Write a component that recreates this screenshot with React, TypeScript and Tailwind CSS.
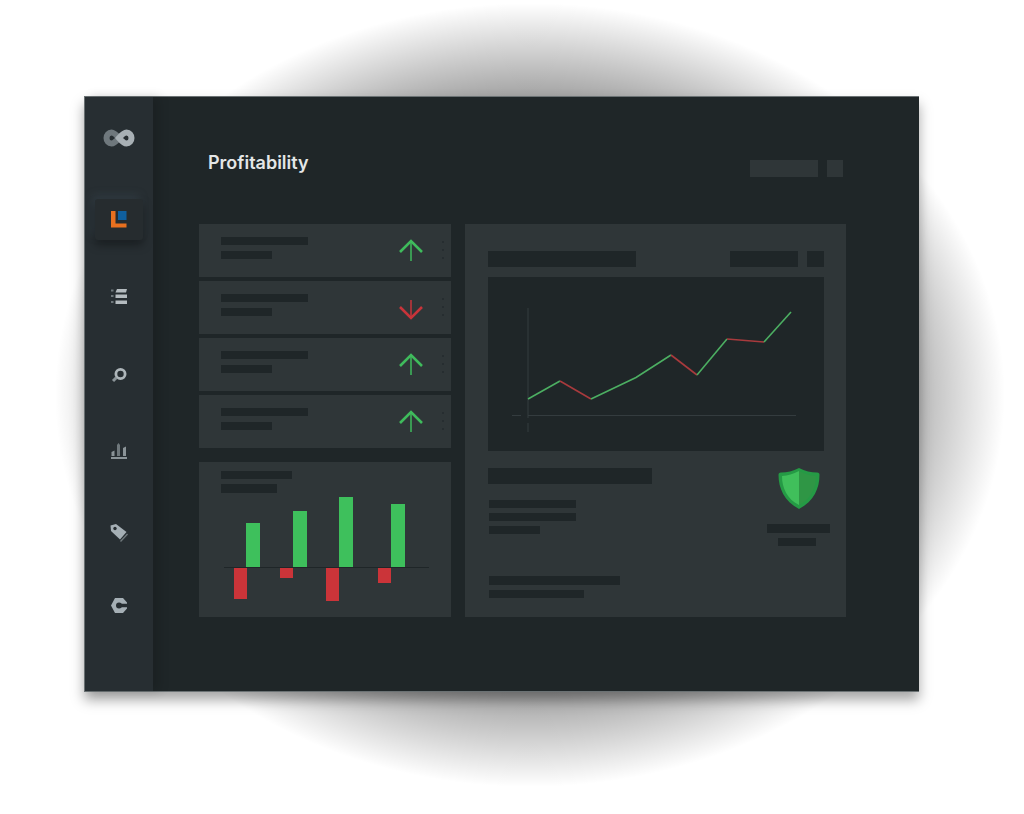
const rows = [
  { up: true },
  { up: false },
  { up: true },
  { up: true },
]

const greenBars = [
  { x: 22, h: 44 },
  { x: 69, h: 56 },
  { x: 115, h: 70 },
  { x: 167, h: 63 },
]

const redBars = [
  { x: 10, h: 31 },
  { x: 56, h: 10 },
  { x: 102, h: 33 },
  { x: 154, h: 15 },
]

function Bar({ className }: { className: string }) {
  return <div className={`bg-[#1f2628] ${className}`} />
}

function Arrow({ up }: { up: boolean }) {
  return (
    <svg width="24" height="26" viewBox="0 0 24 26" fill="none" strokeWidth="2.600" stroke={up ? "#3fbb5c" : "#c8343a"} className="-mt-[2px]">
      {up ? (
        <>
          <path d="M12 4V24" strokeWidth="1.500" />
          <path d="M1 15L12 4L23 15" />
        </>
      ) : (
        <>
          <path d="M12 6V24" strokeWidth="1.500" />
          <path d="M1 13L12 24L23 13" />
        </>
      )}
    </svg>
  )
}

function Row({ up }: { up: boolean }) {
  return (
    <div className="h-[53px] bg-[#2f3638] flex items-center pl-[22px]">
      <div className="flex flex-col gap-[6px] w-[178px] pb-[5px]">
        <Bar className="w-[87px] h-[8px]" />
        <Bar className="w-[51px] h-[8px]" />
      </div>
      <Arrow up={up} />
      <div className="ml-[19px] -mt-[2px] flex flex-col gap-[6px]">
        <div className="w-[2px] h-[2px] bg-[#262d30]" />
        <div className="w-[2px] h-[2px] bg-[#262d30]" />
        <div className="w-[2px] h-[2px] bg-[#262d30]" />
      </div>
    </div>
  )
}

function BarChart() {
  return (
    <svg width="212" height="110" viewBox="0 0 212 110" className="ml-[25px] mt-[4px]">
      {greenBars.map((b) => (
        <rect key={b.x} x={b.x} y={70 - b.h} width="14" height={b.h} fill="#3ec05c" />
      ))}
      <rect x="0" y="70" width="205" height="1" fill="#1f2628" />
      {redBars.map((b) => (
        <rect key={b.x} x={b.x} y="71" width="13" height={b.h} fill="#cb3439" />
      ))}
    </svg>
  )
}

function LineChart() {
  return (
    <svg width="336" height="174" viewBox="0 0 336 174" fill="none" className="bg-[#1f2628]">
      <path d="M40 31V141M40 146V155M24 138.500H33M40 138.500H308" stroke="#343c3f" strokeWidth="1" />
      <g strokeWidth="1.600">
        <path d="M40 122L72 104" stroke="#4caf62" />
        <path d="M72 104L103 122" stroke="#a83a3d" />
        <path d="M103 122L148 100.500L183 78" stroke="#4caf62" />
        <path d="M183 78L209 98" stroke="#a83a3d" />
        <path d="M209 98L239 62" stroke="#4caf62" />
        <path d="M239 62L276 65" stroke="#a83a3d" />
        <path d="M276 65L303 35" stroke="#4caf62" />
      </g>
    </svg>
  )
}

function Shield() {
  return (
    <svg width="42" height="41" viewBox="0 0 42 41">
      <path d="M21 0C27 3 33 4.500 39 4.500C41 4.500 41.500 5.500 41.500 7C41.500 20 36 33 21 41C6 33 0.500 20 0.500 7C0.500 5.500 1 4.500 3 4.500C9 4.500 15 3 21 0Z" fill="#259a45" />
      <path d="M21 3C15 6 10 7.500 4 8C4 20 9 31 21 37Z" fill="#40bf5b" />
      <path d="M21 3C27 6 32 7.500 38 8C38 20 33 31 21 37Z" fill="#2f9645" />
    </svg>
  )
}

function LogoIcon() {
  return (
    <svg width="32" height="20" viewBox="0 0 32 20" fill="none">
      <path d="M16 10C13 6.500 11 4.500 8.500 4.500C5.500 4.500 3.500 7 3.500 10C3.500 13 5.500 15.500 8.500 15.500C11 15.500 13 13.500 16 10Z" stroke="#6f787d" strokeWidth="6" />
      <path d="M16 10C19 6.500 21 4.500 23.500 4.500C26.500 4.500 28.500 7 28.500 10C28.500 13 26.500 15.500 23.500 15.500C21 15.500 19 13.500 16 10Z" stroke="#a8b0b5" strokeWidth="6" />
    </svg>
  )
}

function ActiveIcon() {
  return (
    <svg width="16" height="17" viewBox="0 0 16 17">
      <path d="M0 0H4.500V12.500H15.500V16.500H0Z" fill="#e8701f" />
      <rect x="7" y="0" width="8.500" height="9" fill="#0f5f9e" />
    </svg>
  )
}

function ListIcon() {
  return (
    <svg width="16" height="15" viewBox="0 0 16 15" fill="#b4bbbf">
      <rect x="0" y="0.500" width="2.500" height="2" fill="#6f787c" />
      <rect x="0" y="6" width="2.500" height="2" fill="#6f787c" />
      <rect x="0" y="12" width="2.500" height="2" fill="#6f787c" />
      <path d="M6 0H16L15 3.500H4.500Z" />
      <path d="M4.500 5.500H16V9H4.500Z" />
      <path d="M4.500 11.500H16V15H4.500Z" />
    </svg>
  )
}

function SearchIcon() {
  return (
    <svg width="16" height="15" viewBox="0 0 16 15" fill="none">
      <circle cx="9.500" cy="6" r="4.600" stroke="#aeb6ba" strokeWidth="2.800" />
      <path d="M5.500 9.500L2 13" stroke="#8b9498" strokeWidth="3" />
    </svg>
  )
}

function StatsIcon() {
  return (
    <svg width="16" height="16" viewBox="0 0 16 16">
      <path d="M0.500 13V9L3.500 7.500V13Z" fill="#8b9498" />
      <path d="M6 13V2L7.500 0L9 2V13Z" fill="#6f787c" />
      <path d="M12 13V5L15 3.500V13Z" fill="#8b9498" />
      <rect x="0" y="14" width="16" height="2" fill="#8b9498" />
    </svg>
  )
}

function TagIcon() {
  return (
    <svg width="18" height="18" viewBox="0 0 18 18">
      <path d="M0.500 1.500L6 0L16.500 8L10 15.500L1 7Z" fill="#a5afb5" />
      <circle cx="5" cy="4.500" r="1.700" fill="#272e32" />
      <path d="M17 9.500L18 10.500L11 18L10 17Z" fill="#6f787c" />
    </svg>
  )
}

function GearIcon() {
  return (
    <svg width="16" height="15" viewBox="0 0 16 15">
      <path d="M4 0H12L16 4.500V5.800H9V9.200H16V10.500L12 15H4L0 7.500Z" fill="#a5afb5" />
      <circle cx="8" cy="7.500" r="3" fill="#272e32" />
    </svg>
  )
}

export default function App() {
  return (
    <div className="relative w-full h-[814px] overflow-hidden bg-white pt-[96px] pl-[84px] [font-family:Inter,sans-serif]">
      {/* soft halo behind the window */}
      <div className="absolute left-[55px] top-[3px] w-[950px] h-[784px] bg-[radial-gradient(closest-side,rgba(0,0,0,0.9)_40%,rgba(0,0,0,0)_100%)]" />

      <div className="relative w-[835px] h-[596px] flex bg-[#1f2628] border-y border-l border-[#6b7274] shadow-[0_8px_12px_rgba(0,0,0,0.35)]">
        {/* Sidebar */}
        <div className="w-[68px] shrink-0 bg-[#272e32] flex flex-col items-center pt-[31px] shadow-[6px_0_10px_rgba(0,0,0,0.15)]">
          <LogoIcon />
          <div className="mt-[51px] w-[48px] h-[41px] rounded-[3px] bg-[#262c2f] flex items-center justify-center shadow-[0_5px_10px_rgba(0,0,0,0.35),-3px_-4px_8px_rgba(70,85,100,0.3)]">
            <ActiveIcon />
          </div>
          <div className="mt-[49px]"><ListIcon /></div>
          <div className="mt-[64px]"><SearchIcon /></div>
          <div className="mt-[60px]"><StatsIcon /></div>
          <div className="mt-[65px]"><TagIcon /></div>
          <div className="mt-[56px]"><GearIcon /></div>
        </div>

        {/* Main */}
        <div className="flex-1 min-w-0 pl-[46px]">
          <div className="h-[127px] flex items-start">
            <h1 className="mt-[54px] ml-[9px] text-[18px] leading-[24px] font-semibold text-[#e4e6e7]">Profitability</h1>
            <div className="ml-auto mr-[76px] mt-[63px] flex gap-[9px]">
              <div className="w-[68px] h-[17px] bg-[#2f3638]" />
              <div className="w-[16px] h-[17px] bg-[#2f3638]" />
            </div>
          </div>

          <div className="flex gap-[14px]">
            {/* Left column */}
            <div className="w-[252px]">
              <div className="flex flex-col gap-[4px]">
                {rows.map((r, i) => (
                  <Row key={i} up={r.up} />
                ))}
              </div>
              <div className="mt-[14px] h-[155px] bg-[#2f3638] pt-[9px]">
                <div className="pl-[22px] flex flex-col gap-[5px]">
                  <Bar className="w-[71px] h-[8px]" />
                  <Bar className="w-[56px] h-[9px]" />
                </div>
                <BarChart />
              </div>
            </div>

            {/* Right panel */}
            <div className="w-[381px] h-[393px] bg-[#2f3638] pt-[27px] pl-[23px] pr-[22px]">
              <div className="flex">
                <Bar className="w-[148px] h-[16px]" />
                <Bar className="ml-auto w-[68px] h-[16px]" />
                <Bar className="ml-[9px] w-[17px] h-[16px]" />
              </div>
              <div className="mt-[10px]">
                <LineChart />
              </div>
              <div className="mt-[17px] flex justify-between">
                <div>
                  <Bar className="w-[164px] h-[16px]" />
                  <div className="mt-[16px] ml-[1px] flex flex-col gap-[5px]">
                    <Bar className="w-[87px] h-[8px]" />
                    <Bar className="w-[87px] h-[8px]" />
                    <Bar className="w-[51px] h-[8px]" />
                  </div>
                  <div className="mt-[42px] ml-[1px] flex flex-col gap-[5px]">
                    <Bar className="w-[131px] h-[9px]" />
                    <Bar className="w-[95px] h-[8px]" />
                  </div>
                </div>
                <div className="w-[63px] -mr-[6px] flex flex-col items-center">
                  <Shield />
                  <Bar className="mt-[15px] w-[63px] h-[9px]" />
                  <Bar className="mt-[5px] mr-[3px] w-[38px] h-[8px]" />
                </div>
              </div>
            </div>
          </div>
        </div>
      </div>
    </div>
  )
}
